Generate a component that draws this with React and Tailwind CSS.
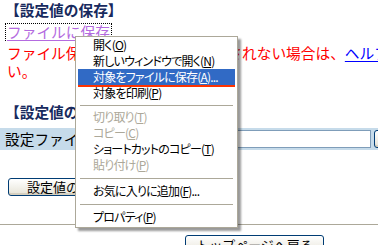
import React from 'react'

const jp = "font-['Noto_Sans_CJK_JP','Noto_Sans',sans-serif]";

const xpButton =
  "h-[18px] border border-[#003c74] rounded-[3px] bg-gradient-to-b from-white to-[#e6e3d6] shadow-[inset_0_-2px_0_#d6d0c0] text-[13px] leading-[16px] text-black";

const Acc = ({ children }) => <span className="underline underline-offset-1">{children}</span>;

const MenuItem = ({ label, acc, tail = "", disabled, active }) => (
  <div
    className={`relative h-[16px] mx-[2px] pl-[15px] flex items-center text-[12px] leading-[16px] tracking-[-0.8px] whitespace-nowrap ${
      active ? "bg-[#316ac5] text-white" : disabled ? "text-[#aca899]" : "text-black"
    }`}
  >
    <span>
      {label}(<Acc>{acc}</Acc>){tail}
    </span>
    {active && <span className="absolute left-0 right-0 -bottom-[2px] h-[2px] bg-[#ff3300]" />}
  </div>
);

const Sep = ({ h = "h-[8px]" }) => (
  <div className={`${h} flex items-center mx-[4px]`}>
    <div className="h-px w-full bg-[#aca899]" />
  </div>
);

const ContextMenu = () => (
  <div className="absolute left-[75px] top-[36px] w-[163px] h-[192px] bg-white border border-[#aca899] shadow-[3px_3px_2px_rgba(0,0,0,0.4)] [font-feature-settings:'palt']">
    <MenuItem label="開く" acc="O" />
    <MenuItem label="新しいウィンドウで開く" acc="N" />
    <MenuItem label="対象をファイルに保存" acc="A" tail="..." active />
    <MenuItem label="対象を印刷" acc="P" />
    <Sep />
    <MenuItem label="切り取り" acc="T" disabled />
    <MenuItem label="コピー" acc="C" disabled />
    <MenuItem label="ショートカットのコピー" acc="T" />
    <MenuItem label="貼り付け" acc="P" disabled />
    <Sep h="h-[10px]" />
    <MenuItem label="お気に入りに追加" acc="F" tail="..." />
    <Sep h="h-[10px]" />
    <MenuItem label="プロパティ" acc="P" />
  </div>
);

export default function App() {
  return (
    <div className={`relative w-[378px] h-[245px] overflow-hidden bg-white ${jp}`}>
      <div className="w-[440px] text-[14.7px] leading-[18px]">
        <h2 className="pl-[5px] h-[20px] leading-[20px] font-bold text-[#172a5e] whitespace-nowrap">
          【設定値の保存】
        </h2>

        <div className="mt-[2px] h-[20px] pl-[5px] flex items-center">
          <span className="px-[1px] border border-dotted border-black leading-[16px]">
            <span className="text-[#b46be0] underline underline-offset-2">ファイルに保存</span>
          </span>
        </div>

        <div className="mt-[2px] pl-[7px] text-[#ff0000] whitespace-nowrap">
          <p>
            ファイル保存のダイアログが表示されない場合は、
            <span className="text-[#0000ff] underline underline-offset-2">ヘルプ</span>
            をご覧くださ
          </p>
          <p>い。</p>
        </div>

        <h2 className="mt-[22px] pl-[5px] h-[20px] leading-[20px] font-bold text-[#172a5e] whitespace-nowrap">
          【設定値の読み込み】
        </h2>

        <div className="mt-[6px] h-[22px] bg-[#c6dbea] flex items-center pl-[5px] pr-[6px]">
          <span className="whitespace-nowrap">設定ファイル：</span>
          <input
            type="text"
            className="ml-[6px] flex-1 min-w-0 h-[18px] border border-[#7f9db9] bg-white"
          />
          <button className={`ml-[3px] w-[60px] shrink-0 ${xpButton}`}>参照...</button>
        </div>

        <div className="mt-[27px] pl-[8px]">
          <button className={`px-[18px] ${xpButton}`}>設定値の読み込み</button>
        </div>

        <div className="mt-[28px] border-t border-[#aca899]" />

        <div className="mt-[10px] pl-[185px]">
          <button className={`w-[139px] h-[20px] ${xpButton}`}>トップページへ戻る</button>
        </div>
      </div>

      <ContextMenu />
    </div>
  );
}
